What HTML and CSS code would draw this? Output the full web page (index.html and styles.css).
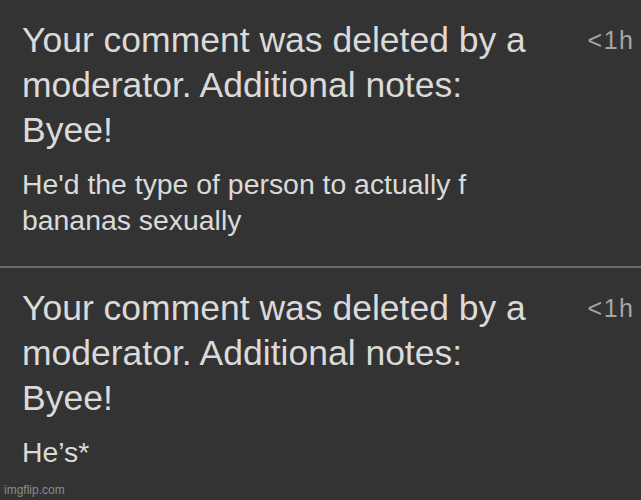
FILE: index.html
```html
<!DOCTYPE html>
<html lang="en">
<head>
<meta charset="utf-8">
<title>Notifications</title>
<link rel="stylesheet" href="styles.css">
</head>
<body>
<main class="list">
  <section class="item">
    <div class="body">
      <p class="title">Your comment was deleted by a moderator. Additional notes: <span class="note">Byee!</span></p>
      <p class="comment">He'd the type of person to actually f bananas sexually</p>
    </div>
    <span class="time">&lt;1h</span>
  </section>
  <section class="item">
    <div class="body">
      <p class="title">Your comment was deleted by a moderator. Additional notes: <span class="note">Byee!</span></p>
      <p class="comment">He’s*</p>
    </div>
    <span class="time">&lt;1h</span>
  </section>
</main>
<span class="watermark">imgflip.com</span>
</body>
</html>
```
FILE: styles.css
```css
html, body {
  margin: 0;
  padding: 0;
  background: #333333;
}
body {
  width: 641px;
  height: 500px;
  overflow: hidden;
  position: relative;
  font-family: "Liberation Sans", Arial, sans-serif;
  color: #dadada;
}
.list {
  display: flex;
  flex-direction: column;
}
.item {
  display: flex;
  align-items: flex-start;
  gap: 25px;
  padding: 18px 8px 28px 22px;
}
.item + .item {
  border-top: 2px solid #6b6b6b;
}
.body {
  flex: 1;
}
.title {
  margin: 0;
  font-size: 35.5px;
  line-height: 45px;
}
.note {
  display: block;
}
.comment {
  margin: 13px 0 0;
  font-size: 28.4px;
  line-height: 36px;
}
.time {
  margin-top: 8px;
  font-size: 25px;
  line-height: 28px;
  letter-spacing: 1.5px;
  color: #a6a6a6;
  margin-right: -1.5px;
}
.watermark {
  position: absolute;
  left: 4px;
  bottom: 3px;
  font-size: 12px;
  color: #8c8c8c;
}
```
